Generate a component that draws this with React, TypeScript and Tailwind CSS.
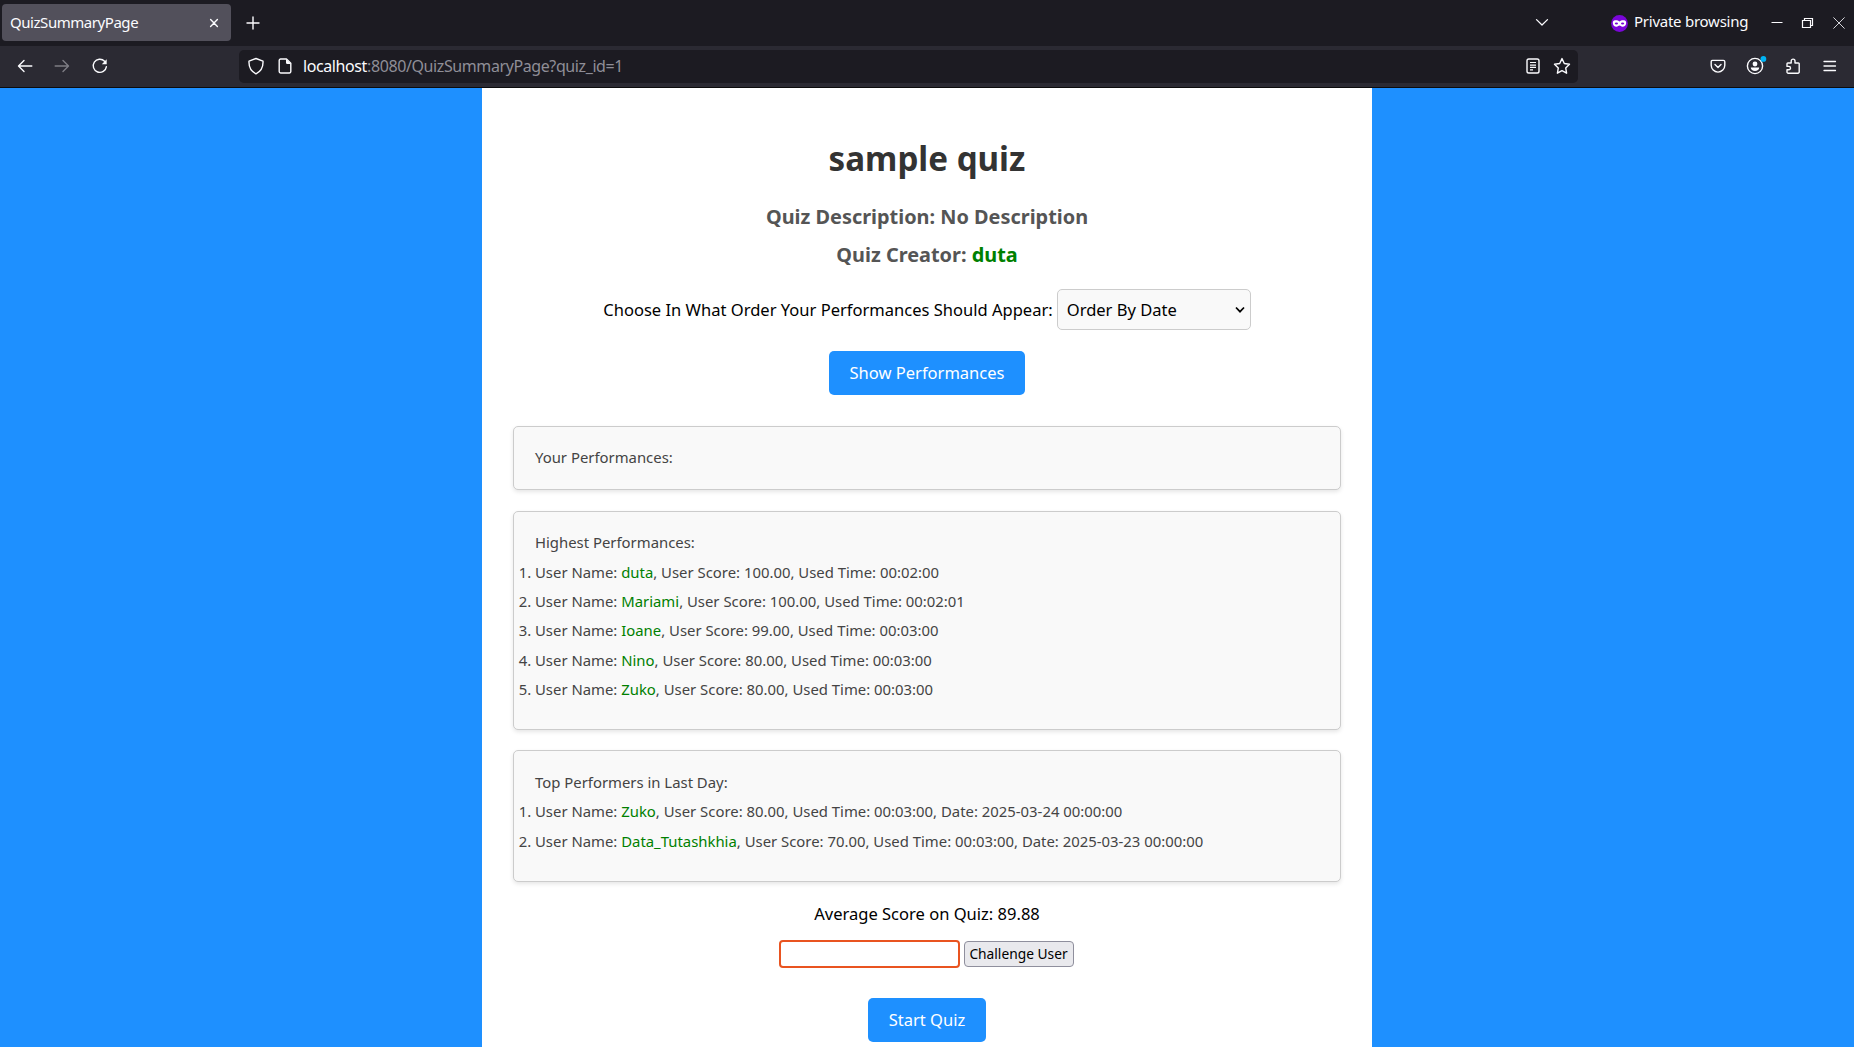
import type { ReactNode } from "react";

type Performance = { name: string; score: string; time: string; date?: string };

const highest: Performance[] = [
  { name: "duta", score: "100.00", time: "00:02:00" },
  { name: "Mariami", score: "100.00", time: "00:02:01" },
  { name: "Ioane", score: "99.00", time: "00:03:00" },
  { name: "Nino", score: "80.00", time: "00:03:00" },
  { name: "Zuko", score: "80.00", time: "00:03:00" },
];

const lastDay: Performance[] = [
  { name: "Zuko", score: "80.00", time: "00:03:00", date: "2025-03-24 00:00:00" },
  { name: "Data_Tutashkhia", score: "70.00", time: "00:03:00", date: "2025-03-23 00:00:00" },
];

function Icon({ children, className = "" }: { children: ReactNode; className?: string }) {
  return (
    <svg
      viewBox="0 0 20 20"
      className={`size-5 shrink-0 overflow-visible ${className}`}
      fill="none"
      stroke="#fbfbfe"
      strokeWidth="1.4"
      strokeLinecap="round"
      strokeLinejoin="round"
    >
      {children}
    </svg>
  );
}

function TabBar() {
  return (
    <div className="flex h-[46px] items-center bg-[#1c1b22] pl-[2px] text-[15px] text-[#fbfbfe]">
      <div className="-mt-px flex h-[37px] w-[229px] items-center justify-between rounded-[4px] bg-[#52505b] pr-[7px] pl-[8px]">
        <span className="tracking-[-0.45px]">QuizSummaryPage</span>
        <Icon>
          <path d="M6.6 6.6l6.8 6.8M13.4 6.6l-6.8 6.8" />
        </Icon>
      </div>
      <Icon className="ml-[12px]">
        <path d="M10 4v12M4 10h12" />
      </Icon>
      <Icon className="mt-[-2px] ml-auto">
        <path d="M4.500 7.600L10 13l5.500-5.400" strokeWidth="1.300" />
      </Icon>
      <div className="ml-[59px] flex w-[137px] items-center">
        <svg viewBox="0 0 17 17" className="size-[17px] shrink-0">
          <circle cx="8.500" cy="8.500" r="8.400" fill="#7a06d8" />
          <path
            d="M8.500 6.400C7.300 5.300 5.600 5 4 5.200 2.600 5.400 1.700 6.400 1.800 7.900c.1 2.400 1.700 4 3.800 3.900 1.300 0 1.900-1.200 2.900-1.200s1.600 1.200 2.900 1.200c2.100.1 3.700-1.500 3.800-3.900.1-1.500-.8-2.500-2.200-2.700-1.600-.2-3.300.1-4.500 1.200z"
            fill="#fff"
          />
          <ellipse cx="5.400" cy="8.500" rx="1.600" ry=".9" fill="#7a06d8" />
          <ellipse cx="11.600" cy="8.500" rx="1.600" ry=".9" fill="#7a06d8" />
        </svg>
        <span className="-mt-[4px] ml-[6px] whitespace-nowrap tracking-[-0.25px]">Private browsing</span>
      </div>
      <div className="mr-[5px] ml-[19px] flex gap-[11px]">
        <Icon>
          <path d="M4.500 9.500h11" strokeLinecap="butt" strokeWidth="1" />
        </Icon>
        <Icon>
          <g strokeWidth="1.200" strokeLinejoin="miter">
            <path d="M4.500 7.500h8v7h-8zM6.500 7V5.500h8v7h-2" />
          </g>
        </Icon>
        <Icon>
          <path d="M4.700 4.700l10.600 10.600M15.300 4.700L4.700 15.300" strokeWidth="1" stroke="#d5d5da" />
        </Icon>
      </div>
    </div>
  );
}

function AddressBar() {
  return (
    <div className="flex h-[42px] items-center border-b border-[#0c0c0d] bg-[#2b2a33] pl-[15px]">
      <div className="-mt-px flex w-[224px] gap-[17px]">
        <Icon>
          <path d="M16.800 10H3.600M9 4.600L3.500 10 9 15.400" />
        </Icon>
        <Icon className="opacity-40">
          <path d="M3.200 10h13.200M11 4.600l5.500 5.400-5.500 5.400" />
        </Icon>
        <Icon className="ml-px">
          <path d="M16.400 10.600A6.600 6.600 0 1 1 14.600 5.200" />
          <path d="M16.700 3.300v4.900h-4.900z" fill="#fbfbfe" stroke="none" />
        </Icon>
      </div>
      <div className="flex h-[33px] w-[1339px] items-center rounded-[5px] bg-[#1c1b22] pr-[6.5px] pb-px pl-[6.5px]">
        <Icon>
          <path d="M10 2.500l7 2.600c.3 5.200-1.700 10-7 12.700-5.300-2.700-7.300-7.500-7-12.700z" />
        </Icon>
        <Icon className="ml-[9px]">
          <path d="M5.600 3h5.900l4.300 4.300v8.300a1.400 1.400 0 0 1-1.400 1.400H5.600a1.400 1.400 0 0 1-1.400-1.400V4.400A1.400 1.400 0 0 1 5.600 3z" />
          <path d="M11 3l5 5h-3.800A1.200 1.200 0 0 1 11 6.800z" fill="#fbfbfe" stroke="none" />
        </Icon>
        <span className="-mt-px ml-[8.5px] text-[16px] tracking-[-0.4px] text-[#8f8e97]">
          <span className="text-[#fbfbfe]">localhost</span>:8080/QuizSummaryPage?quiz_id=1
        </span>
        <Icon className="ml-auto">
          <rect x="4" y="3" width="12" height="14" rx="1.800" />
          <path d="M7 6.500h6M7 9.200h6M7 11.400h6M7 13.800h3" strokeWidth="1.200" strokeLinecap="butt" />
        </Icon>
        <Icon className="ml-[9px]">
          <path d="M10 2.600l2.300 4.900 5.200.7-3.800 3.700.9 5.300-4.600-2.500-4.600 2.500.9-5.300-3.800-3.700 5.200-.7z" />
        </Icon>
      </div>
      <div className="-mt-px mr-[14.5px] ml-auto flex gap-[17px]">
        <Icon>
          <path d="M5 4.400h10.400a1.400 1.400 0 0 1 1.400 1.400v3.500a6.800 6.800 0 0 1-13.600 0V5.800A1.400 1.400 0 0 1 5 4.400z" />
          <path d="M7 8.500l3 2.900 3-2.900" />
        </Icon>
        <Icon className="mr-px">
          <circle cx="10" cy="10" r="7.600" />
          <circle cx="10" cy="8" r="2.400" fill="#fbfbfe" stroke="none" />
          <path d="M5.800 11.600h8.400c0 2-1.800 3.500-4.200 3.500s-4.200-1.500-4.200-3.500z" fill="#fbfbfe" stroke="none" />
          <circle cx="18.400" cy="2.900" r="2.900" fill="#00b3f4" stroke="none" />
        </Icon>
        <Icon>
          <path d="M8.200 7V5a1.900 1.900 0 0 1 3.800 0v2h3.400a.8.8 0 0 1 .8.8V16a1.200 1.200 0 0 1-1.200 1.200H5.200A1.200 1.200 0 0 1 4 16v-2.200h1.800a1.700 1.700 0 0 0 0-3.400H4V7.800a.8.8 0 0 1 .8-.8z" />
        </Icon>
        <Icon>
          <path d="M4 5.500h11.500M4 10h11.500M4 14.500h11.500" strokeWidth="1.300" />
        </Icon>
      </div>
    </div>
  );
}

function Panel({ title, items = [], className }: { title: string; items?: Performance[]; className: string }) {
  return (
    <section
      className={`rounded-[5px] border border-[#ccc] bg-[#f9f9f9] pl-[21px] text-[14.890px] leading-[29.300px] text-[#444] shadow-[0_2px_4px_rgba(0,0,0,0.1)] ${className}`}
    >
      <h3>{title}</h3>
      <ol className="list-decimal">
        {items.map((p) => (
          <li key={p.name}>
            User Name: <span className="text-[#008000]">{p.name}</span>, User Score: {p.score}, Used Time: {p.time}
            {p.date && <>, Date: {p.date}</>}
          </li>
        ))}
      </ol>
    </section>
  );
}

export default function App() {
  return (
    <div className="flex h-[1047px] flex-col overflow-hidden bg-[#1e90ff] font-['Noto_Sans',sans-serif]">
      <header>
        <TabBar />
        <AddressBar />
      </header>
      <main className="mx-auto flex w-[890px] flex-1 flex-col bg-white px-[31px] text-[16.550px] leading-6 text-black">
        <h1 className="mt-[47px] text-center text-[33.150px] leading-[48px] font-bold text-[#333]">sample quiz</h1>
        <div className="mt-[15px] text-center text-[19.900px] leading-[38px] font-bold text-[#555]">
          <p>Quiz Description: No Description</p>
          <p>
            Quiz Creator: <span className="text-[#008000]">duta</span>
          </p>
        </div>
        <div className="mt-[15px] flex items-center justify-center gap-[4px]">
          <label>Choose In What Order Your Performances Should Appear:</label>
          <div className="flex h-[41px] w-[194px] items-center justify-between rounded-[5px] border border-[#ccc] bg-[#f9f9f9] pr-[5px] pl-[9px]">
            Order By Date
            <svg viewBox="0 0 10 8" className="h-2 w-2.5" fill="none" stroke="#000" strokeWidth="1.700">
              <path d="M1 1.500l4 4.200 4-4.200" />
            </svg>
          </div>
        </div>
        <button className="mt-[21px] h-[44px] w-[196px] self-center rounded-[5px] bg-[#1e90ff] text-white">
          Show Performances
        </button>
        <Panel title="Your Performances:" className="mt-[31px] h-[64px] pt-[16px]" />
        <Panel title="Highest Performances:" items={highest} className="mt-[21px] h-[219px] pt-[16.330px]" />
        <Panel title="Top Performers in Last Day:" items={lastDay} className="mt-[20px] h-[132px] pt-[17px]" />
        <p className="mt-5 text-center">Average Score on Quiz: 89.88</p>
        <div className="mt-[14px] mr-[2px] flex items-center justify-center gap-[4px]">
          <input className="h-[28px] w-[181px] rounded-[4px] border-2 border-[#e95420] bg-white px-1 outline-none" />
          <button className="h-[26px] w-[110px] rounded-[4px] border border-[#8f8f9d] bg-[#e9e9ed] text-[13.780px] leading-5">
            Challenge User
          </button>
        </div>
        <button className="mt-[30px] h-[44px] w-[118px] shrink-0 self-center rounded-[5px] bg-[#1e90ff] text-white">
          Start Quiz
        </button>
      </main>
    </div>
  );
}
